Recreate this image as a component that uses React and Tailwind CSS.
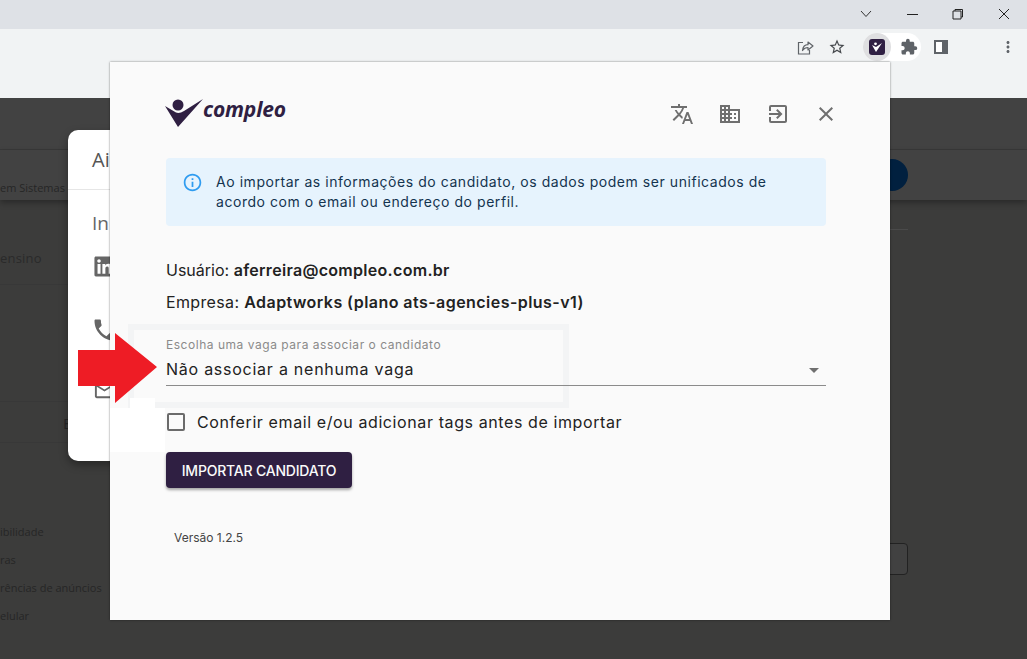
import React from "react";
import { MdTranslate, MdDomain, MdExitToApp, MdClose, MdInfoOutline, MdPhone, MdMailOutline, MdExtension, MdStarBorder, MdArrowDropDown, MdMoreVert } from "react-icons/md";
import { FaLinkedin } from "react-icons/fa";

const FONT = "font-['Inter','Noto_Sans',sans-serif]";

function Logo() {
  return (
    <div className="flex items-center mt-[2px]">
      <svg width="40" height="34" viewBox="0 0 40 34" className="shrink-0">
        <circle cx="14" cy="10" r="5.5" fill="#2f1f42" />
        <path d="M1 11 L12 17.5 C14 18.5 17 18 20 16 L39 4 L14 32 Z" fill="#2f1f42" />
      </svg>
      <span className="font-['Open_Sans',sans-serif] font-bold italic text-[21px] leading-none text-[#2f1f42] -ml-[1px] -mt-[5px] tracking-[-0.2px]">compleo</span>
    </div>
  );
}

export default function App() {
  return (
    <div className={`relative h-[659px] w-[1027px] overflow-hidden flex flex-col ${FONT}`}>
      {/* window title bar */}
      <div className="h-[29px] bg-[#dee1e6] flex items-center justify-end shrink-0 pb-[1px]">
        <svg width="12" height="8" viewBox="0 0 12 8" className="mr-[35px]"><path d="M1 1 L6 6.5 L11 1" fill="none" stroke="#333" strokeWidth="1" /></svg>
        <div className="w-[11px] h-[1px] bg-[#222] mr-[34px]" />
        <svg width="12" height="12" viewBox="0 0 12 12" className="mr-[34px]"><path d="M3 3 V1.5 H10.5 V9 H9 M1 3 H9 V11 H1 Z" fill="none" stroke="#222" strokeWidth="1" /></svg>
        <svg width="12" height="12" viewBox="0 0 12 12" className="mr-[17px]"><path d="M1 1 L11 11 M11 1 L1 11" stroke="#222" strokeWidth="1" /></svg>
      </div>
      {/* browser toolbar */}
      <div className="h-[69px] bg-[#f1f3f4] shrink-0 flex items-start justify-end pt-[4px] pr-[13px]">
        <div className="flex items-center h-[28px]">
          <svg width="17" height="17" viewBox="0 0 17 17" className="mr-[14px]">
            <path d="M6 3.5 H1.5 V15 H12.5 V11" fill="none" stroke="#5f6368" strokeWidth="1.2" />
            <path d="M5.5 11.5 C6 7.5 8.5 5.7 11 5.7 V3 L16 7 L11 11 V8.5 C9 8.5 7 9.3 5.5 11.5 Z" fill="none" stroke="#5f6368" strokeWidth="1.2" strokeLinejoin="round" />
          </svg>
          <MdStarBorder size={18} className="text-[#45484c] mr-[17px]" />
          <div className="h-[28px] w-[58px] rounded-full bg-white flex items-center mr-[13px]">
            <div className="w-[28px] h-[28px] rounded-full bg-[#dfdfe1] flex items-center justify-center">
              <div className="w-[16px] h-[16px] rounded-[3px] bg-[#2f1f42] flex items-center justify-center">
                <svg width="12" height="10" viewBox="0 0 12 10"><circle cx="4.5" cy="1.8" r="1.4" fill="#fff" /><path d="M1 3 L5 5 L11 1 L5 10 Z" fill="#fff" /></svg>
              </div>
            </div>
            <MdExtension size={18} className="text-[#5f6368] ml-[9px]" />
          </div>
          <div className="w-[14px] h-[14px] border-[2px] border-[#5f6368] border-r-[6px] bg-white mr-[51px]" />
          <MdMoreVert size={18} className="text-[#5f6368] mr-[-3px]" />
        </div>
      </div>

      {/* dimmed page beneath */}
      <div className="flex-1 bg-[#3c3c3b] flex flex-col text-[#282828] text-[11px] font-['Open_Sans',sans-serif]">
        <div className="h-[52px] bg-[#424242] border-b border-[#393939] shrink-0" />
        <div className="h-[50px] bg-[#424242] shadow-[0_3px_6px_rgba(0,0,0,0.3)] flex items-center justify-between shrink-0 pr-[119px] pt-[26px]">
          <span className="text-[11px] text-[#262626] mt-[1px]">em Sistemas</span>
          <div className="w-[32px] h-[32px] rounded-full bg-[#01203f] -mt-[26px]" />
        </div>
        <div className="h-[62px] flex items-end shrink-0">
          <span className="text-[13px] tracking-[0.2px] text-[#2a2a2a] mb-[-6px]">ensino</span>
        </div>
        <div className="flex-1 pt-[263px] flex flex-col gap-[14px] leading-[14px] text-[11px] text-[#262626]">
          <span>ibilidade</span>
          <span>ras</span>
          <span>rências de anúncios</span>
          <span>elular</span>
        </div>
      </div>

      {/* hairlines and clipped items of the dimmed page */}
      <div className="absolute left-0 top-[284px] w-[68px] h-[1px] bg-[#383838]" />
      <div className="absolute left-0 top-[401px] w-[68px] h-[1px] bg-[#383838]" />
      <div className="absolute left-0 top-[442px] w-[68px] h-[1px] bg-[#383838]" />
      <div className="absolute left-[63px] top-[412px] text-[15px] text-[#262626] font-['Open_Sans',sans-serif]">E</div>
      <div className="absolute left-[780px] top-[229px] w-[128px] h-[1px] bg-[#4a4a4a]" />
      <div className="absolute left-[850px] top-[543px] w-[58px] h-[32px] rounded-[4px] border border-[#222] bg-[#414141]" />

      {/* card behind the popup */}
      <div className="absolute left-[68px] top-[130px] w-[100px] h-[331px] bg-white rounded-[10px] shadow-[0_4px_8px_rgba(0,0,0,0.35)] text-[#444] overflow-hidden font-['Open_Sans',sans-serif]">
        <div className="h-[60px] border-b border-[#e6e6e6] pl-[24px] flex items-center text-[20px] text-[#555]">Ai</div>
        <div className="pl-[24px] pt-[20px] text-[19px] text-[#666] leading-[26px]">In</div>
        <FaLinkedin size={23} className="ml-[25px] mt-[19px] text-[#666]" />
        <MdPhone size={28} className="ml-[23px] mt-[38px] text-[#666]" />
        <MdMailOutline size={23} className="ml-[25px] mt-[35px] text-[#666]" />
      </div>

      {/* extension popup */}
      <div className={`absolute left-[110px] top-[62px] w-[780px] h-[558px] bg-[#fafafa] shadow-[0_0_2px_rgba(0,0,0,0.5)] ${FONT}`}>
        <div className="absolute left-[18px] top-[262px] w-[441px] h-[84px] border-[6px] border-[#f3f4f5]" />
        <div className="pl-[54px] pt-[31px] pr-[52px] flex items-start justify-between">
          <Logo />
          <div className="flex items-center gap-[24px] text-[#6f6f6f] mt-[9px]">
            <MdTranslate size={24} />
            <MdDomain size={24} />
            <MdExitToApp size={24} />
            <MdClose size={24} />
          </div>
        </div>
        <div className="ml-[56px] mt-[29px] w-[660px] h-[68px] rounded-[4px] bg-[#e6f3fd] flex pl-[16px] pt-[14px] text-[#14344f]">
          <MdInfoOutline size={21} className="text-[#2f9cf0] shrink-0" />
          <p className="ml-[13px] text-[14px] leading-[20px] tracking-[0.55px] w-[590px]">Ao importar as informações do candidato, os dados podem ser unificados de acordo com o email ou endereço do perfil.</p>
        </div>
        <div className="ml-[56px] mt-[34px] text-[16px] leading-[20px] text-[#222]">
          <div>Usuário: <span className="font-semibold tracking-[0.3px]">aferreira@compleo.com.br</span></div>
          <div className="mt-[12px] tracking-[0.35px]">Empresa: <span className="font-semibold tracking-[0.45px]">Adaptworks (plano ats-agencies-plus-v1)</span></div>
        </div>
        <div className="ml-[56px] mt-[26px] w-[660px] relative z-10 border-b border-[#8b8b8b] h-[48px]">
          <div className="text-[12px] leading-[14px] text-[#8a8a8a] mt-[2px] tracking-[0.53px]">Escolha uma vaga para associar o candidato</div>
          <div className="text-[16px] leading-[22px] text-[#222] mt-[6px] tracking-[0.75px]">Não associar a nenhuma vaga</div>
          <MdArrowDropDown size={24} className="absolute right-0 top-[20px] text-[#6f6f6f]" />
        </div>
        <div className="ml-[56px] mt-[25px] flex items-center relative z-10">
          <div className="w-[18px] h-[18px] ml-[1px] rounded-[2px] border-2 border-[#6b6b6b]" />
          <span className="ml-[12px] text-[16px] leading-[22px] tracking-[0.6px] text-[#222]">Conferir email e/ou adicionar tags antes de importar</span>
        </div>
        <button className={`ml-[56px] mt-[19px] block w-[186px] h-[36px] rounded-[4px] bg-[#2f1f42] text-[#fafafa] text-[14px] tracking-[-0.2px] font-medium shadow-[0_2px_3px_rgba(0,0,0,0.35)] ${FONT}`}>IMPORTAR CANDIDATO</button>
        <div className="ml-[64px] mt-[42px] text-[12px] leading-[16px] text-[#444]">Versão 1.2.5</div>
      </div>

      {/* annotation layer */}
      <div className="absolute left-[110px] top-[408px] w-[55px] h-[44px] bg-white" />
      <div className="absolute left-[130px] top-[398px] w-[25px] h-[10px] bg-white" />
      <svg className="absolute left-[78px] top-[333px]" width="80" height="70" viewBox="0 0 80 70">
        <path d="M0 17 H37 V0 L79 34 L37 70 V53 H0 Z" fill="#ee1c25" />
      </svg>
    </div>
  );
}
